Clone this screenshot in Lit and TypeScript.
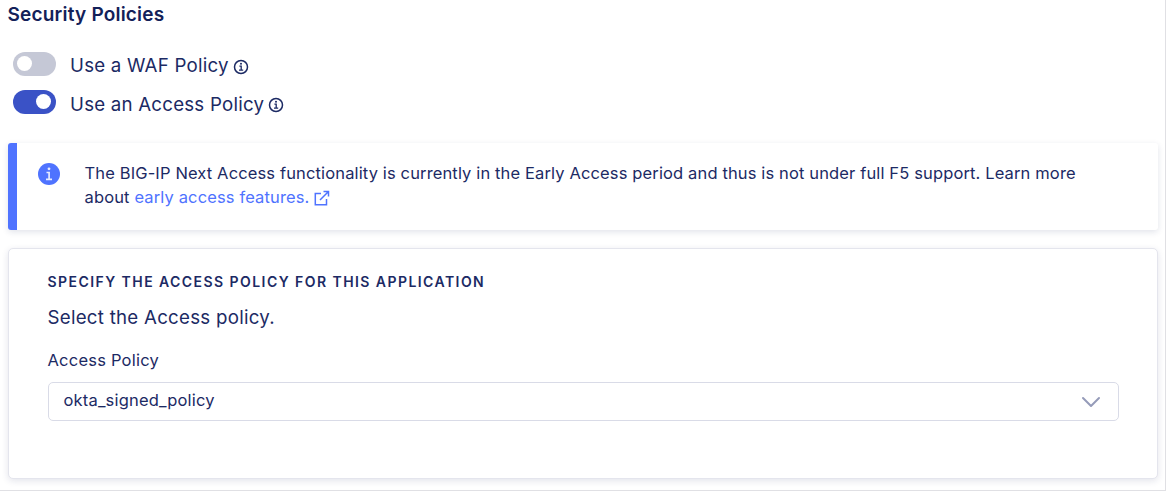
import { LitElement, html, css, svg } from "lit";
import { customElement, property } from "lit/decorators.js";

const infoOutline = html`<svg class="info" width="16" height="16" viewBox="0 0 16 16" fill="none" stroke="currentColor">
  ${svg`<circle cx="8" cy="8" r="6.5" stroke-width="1.5"/><path d="M6.4 7.2h1.8v3.8M6 11.2h4.2" stroke-width="1.3"/><circle cx="8" cy="4.8" r="1" fill="currentColor" stroke="none"/>`}
</svg>`;

@customElement("policy-toggle")
export class PolicyToggle extends LitElement {
  @property() label = "";
  @property({ type: Boolean, reflect: true }) on = false;

  static styles = css`
    :host { display: flex; height: 38px; }
    .track { box-sizing: border-box; width: 43px; height: 24px; padding: 4px; border-radius: 12px; background: #c5c8d6; display: flex; }
    .knob { width: 15px; height: 15px; border-radius: 50%; background: #fff; }
    :host([on]) .track { background: #3a52c6; justify-content: flex-end; padding-right: 5px; }
    .label { margin-left: 14.5px; font-size: 18.7px; line-height: 24px; padding-top: 2px; letter-spacing: 0.22px; white-space: nowrap; }
    :host([on]) .label { padding-top: 3px; }
    .info { margin: 7px 0 0 4px; flex: none; }
  `;

  render() {
    return html`<div class="track"><div class="knob"></div></div>
      <span class="label">${this.label}</span>${infoOutline}`;
  }
}

@customElement("app-root")
export class AppRoot extends LitElement {
  static styles = css`
    :host { display: block; width: 1166px; height: 491px; box-sizing: border-box; border-right: 1px solid #e0e0e4; border-bottom: 1px solid #e0e0e4; overflow: hidden; background: #fff; color: #1c2a64; font-family: Inter, "Liberation Sans", sans-serif; }
    .page { display: flex; flex-direction: column; padding: 3px 7px 0 7.5px; }
    .title { margin: 0; font-size: 19px; line-height: 24px; font-weight: 600; letter-spacing: 0.2px; color: #132159; }
    .toggles { padding: 25px 0 0 5px; height: 91px; box-sizing: content-box; }
    .notice { box-sizing: border-box; height: 87px; display: flex; border-left: 9px solid #4f73ff; border-radius: 3px; padding: 18px 0 0 21px; box-shadow: 0 2px 6px rgba(27, 37, 89, 0.13); background: #fff; }
    .badge { margin-top: 2px; flex: none; }
    .message { margin: 0 0 0 25px; font-size: 16.5px; line-height: 24px; letter-spacing: 0.135px; white-space: nowrap; }
    .link { color: #4f73ff; text-decoration: none; }
    .external { vertical-align: -3px; }
    .card { box-sizing: border-box; height: 231px; margin-top: 18px; border: 1.5px solid #e4e5ed; border-radius: 5px; padding: 23px 38px 0 39px; box-shadow: 0 2px 7px rgba(27, 37, 89, 0.12); background: #fff; }
    .heading { margin: 0; font-size: 14px; line-height: 20px; font-weight: 600; letter-spacing: 1.44px; }
    .hint { margin: 14px 0 0; font-size: 18.7px; line-height: 24px; letter-spacing: 0.26px; }
    .field { margin: 20px 0 0; font-size: 16.5px; line-height: 20px; letter-spacing: 0.22px; }
    .select { box-sizing: border-box; height: 39px; margin-top: 12px; border: 1.5px solid #d9dbe7; border-radius: 5px; padding: 0 17px 0 15px; display: flex; align-items: center; justify-content: space-between; font-size: 16.5px; letter-spacing: 0.18px; }
    .value { padding-bottom: 3px; }
    .chevron { margin-top: 1px; }
  `;

  render() {
    return html`<main class="page">
      <h2 class="title">Security Policies</h2>
      <div class="toggles">
        <policy-toggle label="Use a WAF Policy"></policy-toggle>
        <policy-toggle label="Use an Access Policy" on></policy-toggle>
      </div>
      <section class="notice">
        <svg class="badge" width="22" height="22" viewBox="0 0 22 22">
          <circle cx="11" cy="11" r="11" fill="#4f73ff"/>
          <circle cx="11" cy="5.8" r="1.4" fill="#e6ebff"/>
          <path d="M8.5 9.5h2.6v6.8M8 16.4h6" fill="none" stroke="#e6ebff" stroke-width="1.7"/>
        </svg>
        <p class="message">The BIG-IP Next Access functionality is currently in the Early Access period and thus is not under full F5 support. Learn more<br>about <a class="link">early access features. <svg class="external" width="16" height="16" viewBox="0 0 16 16" fill="none" stroke="currentColor" stroke-width="1.5"><path d="M7 3.5H1.3v11.2h11.2V9M9.5 1.5h5v5M14.5 1.5 6 10"/></svg></a></p>
      </section>
      <section class="card">
        <h3 class="heading">SPECIFY THE ACCESS POLICY FOR THIS APPLICATION</h3>
        <p class="hint">Select the Access policy.</p>
        <p class="field">Access Policy</p>
        <div class="select">
          <span class="value">okta_signed_policy</span>
          <svg class="chevron" width="20" height="12" viewBox="0 0 20 12" fill="none" stroke="#959bb9" stroke-width="2" stroke-linecap="round" stroke-linejoin="round"><path d="m2 2 8 8 8-8"/></svg>
        </div>
      </section>
    </main>`;
  }
}
